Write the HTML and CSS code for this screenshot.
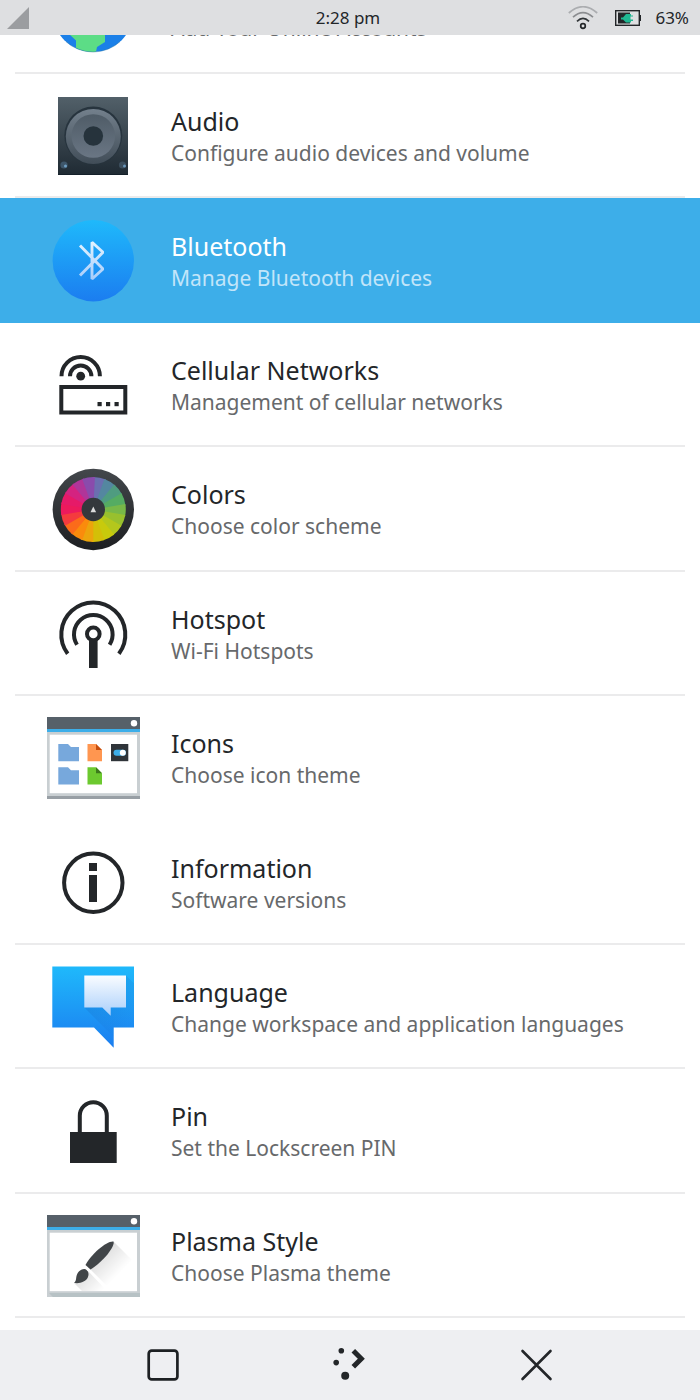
FILE: index.html
```html
<!DOCTYPE html>
<html lang="en">
<head>
<meta charset="utf-8">
<meta name="viewport" content="width=device-width, initial-scale=1">
<title>Settings</title>
<link rel="stylesheet" href="styles.css">
</head>
<body>

<!-- Status bar -->
<header class="statusbar">
  <div class="status-left">
    <svg class="signal" viewBox="0 0 22 22"><path d="M0 22L22 0V22Z" fill="#9b9da0"/></svg>
  </div>
  <div class="clock">2:28 pm</div>
  <div class="status-right">
    <svg class="wifi" viewBox="0 0 30 24" fill="none" stroke-width="1.7">
      <path d="M.8 7Q15-5.600 29.200 7" stroke="#abadb0"/>
      <path d="M5 11.200Q15 2 25 11.200" stroke="#8b8d90"/>
      <path d="M9 15.300Q15 9.600 21 15.300" stroke="#303437"/>
      <circle cx="15" cy="20" r="2.300" stroke="#232629"/>
    </svg>
    <svg class="battery" viewBox="0 0 26 16">
      <rect x=".7" y=".7" width="23.600" height="14.600" fill="none" stroke="#232629" stroke-width="1.400"/>
      <rect x="24" y="5" width="2" height="6" fill="#232629"/>
      <rect x="3" y="2.500" width="12" height="11" fill="#232629"/>
      <path d="M6 7.500H8L11 4H16V5.500H18V6.500H15.500V9.500H18V11H16V12.500H11L8 9.500H6Z" fill="#1fb792"/>
    </svg>
    <span class="percent">63%</span>
  </div>
</header>

<!-- Settings modules -->
<main class="modules">
  <a href="#" class="module module-cut">
    <svg class="icon" viewBox="0 0 94 94">
      <circle cx="47" cy="46.500" r="40.500" fill="#1b80e8"/>
      <path d="M16 58L23 69L30 75.500V83Q39 87.500 50 86.800L51 82L59 77V68L40 55Z" fill="#5cdd86"/>
      <path d="M20 76.700A40.500 40.500 0 0 0 74 76.700" fill="none" stroke="#1b6c9c" stroke-opacity=".4"/>
    </svg>
    <div class="label">
      <span class="subtitle">Add Your Online Accounts</span>
    </div>
  </a>

  <a href="#" class="module">
    <svg class="icon" viewBox="0 0 94 94">
      <defs>
        <linearGradient id="box" x1="0" y1="0" x2="0" y2="1"><stop offset="0" stop-color="#526069"/><stop offset="1" stop-color="#1f2a33"/></linearGradient>
        <linearGradient id="cone" x1="0" y1="0" x2="0" y2="1"><stop offset="0" stop-color="#73808c"/><stop offset="1" stop-color="#414d58"/></linearGradient>
        <linearGradient id="cone2" x1="0" y1="0" x2="0" y2="1"><stop offset="0" stop-color="#4f5c67"/><stop offset="1" stop-color="#6a7684"/></linearGradient>
      </defs>
      <rect x="12" y="8" width="70" height="78" fill="url(#box)"/>
      <path d="M12 85.500H82" stroke="#14202a"/>
      <circle cx="47.300" cy="46.500" r="29" fill="#27343e"/>
      <circle cx="47.300" cy="47.500" r="27.500" fill="url(#cone)"/>
      <circle cx="47.300" cy="47" r="21.800" fill="url(#cone2)"/>
      <circle cx="47.300" cy="47" r="9.800" fill="#26333c"/>
      <circle cx="18" cy="76" r="3.600" fill="#3e566a"/><circle cx="19.500" cy="77" r="1.500" fill="#6f9fc4"/>
      <circle cx="76.500" cy="76" r="3.600" fill="#3b4d5c"/><circle cx="78.500" cy="77" r="1.500" fill="#6894b8"/>
    </svg>
    <div class="label">
      <span class="title">Audio</span>
      <span class="subtitle">Configure audio devices and volume</span>
    </div>
  </a>

  <a href="#" class="module selected">
    <svg class="icon" viewBox="0 0 94 94">
      <defs>
        <linearGradient id="blue" x1="0" y1="0" x2="0" y2="1"><stop offset="0" stop-color="#1fb9fb"/><stop offset="1" stop-color="#1b7df0"/></linearGradient>
        <linearGradient id="rune" gradientUnits="userSpaceOnUse" x1="0" y1="26" x2="0" y2="67"><stop offset="0" stop-color="#e4f5ff"/><stop offset="1" stop-color="#a6cbfa"/></linearGradient>
      </defs>
      <circle cx="47.300" cy="46.700" r="40.700" fill="url(#blue)"/>
      <path d="M34 31.500L57 55L46 65V28.300L57 38.300L34 61.500" fill="none" stroke="url(#rune)" stroke-width="2.900" stroke-linejoin="bevel"/>
    </svg>
    <div class="label">
      <span class="title">Bluetooth</span>
      <span class="subtitle">Manage Bluetooth devices</span>
    </div>
  </a>

  <a href="#" class="module">
    <svg class="icon" viewBox="0 0 94 94">
      <g fill="none" stroke="#232629" stroke-width="4">
        <rect x="15.300" y="49" width="64" height="25.500"/>
        <path d="M15.500 38.200A19.200 19.200 0 0 1 53.900 38.200"/>
        <path d="M24 38.200A10.700 10.700 0 0 1 45.400 38.200"/>
      </g>
      <g fill="#232629">
        <circle cx="34.700" cy="38.200" r="4.400"/>
        <rect x="51.500" y="64" width="4.200" height="4.200"/>
        <rect x="60" y="64" width="4.200" height="4.200"/>
        <rect x="68.500" y="64" width="4.200" height="4.200"/>
      </g>
    </svg>
    <div class="label">
      <span class="title">Cellular Networks</span>
      <span class="subtitle">Management of cellular networks</span>
    </div>
  </a>

  <a href="#" class="module">
    <svg class="icon" viewBox="0 0 94 94">
      <defs>
        <linearGradient id="rim" x1="0" y1="0" x2="0" y2="1"><stop offset="0" stop-color="#43474b"/><stop offset="1" stop-color="#1d1f22"/></linearGradient>
      </defs>
      <circle cx="47.300" cy="47.500" r="40.700" fill="url(#rim)"/>
      <!-- each wedge is one dash of a thick ring -->
      <g class="wheel" transform="rotate(-90 47.300 47.500)">
        <circle cx="47.300" cy="47.500" r="21.500" pathLength="18" stroke="#6b6fb0" stroke-dashoffset="0"/>
        <circle cx="47.300" cy="47.500" r="21.500" pathLength="18" stroke="#5487a0" stroke-dashoffset="-1"/>
        <circle cx="47.300" cy="47.500" r="21.500" pathLength="18" stroke="#4f9c80" stroke-dashoffset="-2"/>
        <circle cx="47.300" cy="47.500" r="21.500" pathLength="18" stroke="#55ac62" stroke-dashoffset="-3"/>
        <circle cx="47.300" cy="47.500" r="21.500" pathLength="18" stroke="#78b848" stroke-dashoffset="-4"/>
        <circle cx="47.300" cy="47.500" r="21.500" pathLength="18" stroke="#98c02e" stroke-dashoffset="-5"/>
        <circle cx="47.300" cy="47.500" r="21.500" pathLength="18" stroke="#b4c71c" stroke-dashoffset="-6"/>
        <circle cx="47.300" cy="47.500" r="21.500" pathLength="18" stroke="#c8ca0c" stroke-dashoffset="-7"/>
        <circle cx="47.300" cy="47.500" r="21.500" pathLength="18" stroke="#d3bf08" stroke-dashoffset="-8"/>
        <circle cx="47.300" cy="47.500" r="21.500" pathLength="18" stroke="#eca40c" stroke-dashoffset="-9"/>
        <circle cx="47.300" cy="47.500" r="21.500" pathLength="18" stroke="#fa8b0c" stroke-dashoffset="-10"/>
        <circle cx="47.300" cy="47.500" r="21.500" pathLength="18" stroke="#fb6b1a" stroke-dashoffset="-11"/>
        <circle cx="47.300" cy="47.500" r="21.500" pathLength="18" stroke="#f43b3e" stroke-dashoffset="-12"/>
        <circle cx="47.300" cy="47.500" r="21.500" pathLength="18" stroke="#ec1a5c" stroke-dashoffset="-13"/>
        <circle cx="47.300" cy="47.500" r="21.500" pathLength="18" stroke="#e61a68" stroke-dashoffset="-14"/>
        <circle cx="47.300" cy="47.500" r="21.500" pathLength="18" stroke="#d42380" stroke-dashoffset="-15"/>
        <circle cx="47.300" cy="47.500" r="21.500" pathLength="18" stroke="#b03599" stroke-dashoffset="-16"/>
        <circle cx="47.300" cy="47.500" r="21.500" pathLength="18" stroke="#8a4bac" stroke-dashoffset="-17"/>
      </g>
      <circle cx="47.300" cy="47.500" r="11.700" fill="#34383c"/>
      <path d="M44.500 50.200L47.300 44.500L50.100 50.200Z" fill="#dcdcdc"/>
    </svg>
    <div class="label">
      <span class="title">Colors</span>
      <span class="subtitle">Choose color scheme</span>
    </div>
  </a>

  <a href="#" class="module">
    <svg class="icon" viewBox="0 0 94 94">
      <g fill="none" stroke="#232629" stroke-width="4">
        <path d="M21.700 66.700A32 32 0 1 1 72.900 66.700"/>
        <path d="M31 57.700A19.300 19.300 0 1 1 63.600 57.700"/>
        <circle cx="47.300" cy="46.900" r="6.300"/>
      </g>
      <rect x="43" y="53" width="8.600" height="28" fill="#232629"/>
    </svg>
    <div class="label">
      <span class="title">Hotspot</span>
      <span class="subtitle">Wi-Fi Hotspots</span>
    </div>
  </a>

  <a href="#" class="module no-line">
    <svg class="icon" viewBox="0 0 94 94">
      <rect x="1" y="6" width="93" height="82" fill="#c9cfd2"/>
      <rect x="1" y="6" width="93" height="12" fill="#566069"/>
      <rect x="1" y="18" width="93" height="3" fill="#3daee9"/>
      <rect x="1" y="85" width="93" height="3" fill="#989fa5"/>
      <rect x="3.700" y="23.700" width="87.300" height="58.500" fill="#fff"/>
      <circle cx="88" cy="12.300" r="3.200" fill="#fff"/>
      <path d="M12.300 33H22L25 36H33V50.200H12.300Z M12.300 56.200H22L25 59.200H33V73.500H12.300Z" fill="#77a8dc"/>
      <path d="M41.500 33H50L56 39V50.200H41.500Z" fill="#ff9650"/>
      <path d="M50 33L56 39H50Z" fill="#c64d0c"/>
      <path d="M41.500 56.200H50L56 62.200V73.500H41.500Z" fill="#6cc92f"/>
      <path d="M50 56.200L56 62.200H50Z" fill="#3c7a1c"/>
      <rect x="65" y="33" width="17.300" height="17.200" fill="#2f3439"/>
      <rect x="67.500" y="38.800" width="12.500" height="6" rx="3" fill="#3daee9"/>
      <circle cx="76.800" cy="41.800" r="3" fill="#fff"/>
    </svg>
    <div class="label">
      <span class="title">Icons</span>
      <span class="subtitle">Choose icon theme</span>
    </div>
  </a>

  <a href="#" class="module">
    <svg class="icon" viewBox="0 0 94 94">
      <circle cx="47.300" cy="46.700" r="29.200" fill="none" stroke="#232629" stroke-width="4"/>
      <path d="M43 27H51V35H43Z M43 39H51V66H43Z" fill="#232629"/>
    </svg>
    <div class="label">
      <span class="title">Information</span>
      <span class="subtitle">Software versions</span>
    </div>
  </a>

  <a href="#" class="module">
    <svg class="icon" viewBox="0 0 94 94">
      <defs>
        <linearGradient id="paper" x1="0" y1="0" x2="0" y2="1"><stop offset="0" stop-color="#fafcff"/><stop offset="1" stop-color="#a9cffb"/></linearGradient>
        <linearGradient id="shade" x1="0" y1="0" x2="1" y2="1"><stop offset=".3" stop-color="#1667c0" stop-opacity=".25"/><stop offset=".9" stop-color="#1667c0" stop-opacity="0"/></linearGradient>
      </defs>
      <path d="M6.300 6.500H88V67.500H67.700V87.800L48 67.500H6.300Z" fill="url(#blue)"/>
      <path d="M80 15.500L88 23.500V67.500H67.700V77L38.300 47.500Z" fill="url(#shade)"/>
      <path d="M38.300 15.500H80V47.500H64.700V55.800L56.300 47.500H38.300Z" fill="url(#paper)"/>
    </svg>
    <div class="label">
      <span class="title">Language</span>
      <span class="subtitle">Change workspace and application languages</span>
    </div>
  </a>

  <a href="#" class="module">
    <svg class="icon" viewBox="0 0 94 94">
      <rect x="24" y="48" width="46.700" height="31" fill="#232629"/>
      <path d="M33.800 49V31.700A13.500 13.500 0 0 1 60.800 31.700V49" fill="none" stroke="#232629" stroke-width="4"/>
    </svg>
    <div class="label">
      <span class="title">Pin</span>
      <span class="subtitle">Set the Lockscreen PIN</span>
    </div>
  </a>

  <a href="#" class="module">
    <svg class="icon" viewBox="0 0 94 94">
      <defs>
        <linearGradient id="cast" gradientUnits="userSpaceOnUse" x1="48" y1="46" x2="70" y2="68"><stop offset="0" stop-color="#000" stop-opacity=".15"/><stop offset="1" stop-color="#000" stop-opacity="0"/></linearGradient>
      </defs>
      <rect x="1" y="6" width="93" height="82" fill="#c9cfd2"/>
      <path d="M1 82L7 88H94V84H3Z" fill="#b7c2c5"/>
      <rect x="1" y="6" width="93" height="12" fill="#566069"/>
      <rect x="1" y="18" width="93" height="3" fill="#3daee9"/>
      <rect x="3.700" y="23.700" width="87.300" height="58.500" fill="#fff"/>
      <circle cx="88" cy="12.300" r="3.200" fill="#fff"/>
      <path d="M68 33L91 56V82H66L44 60Z" fill="url(#cast)"/>
      <path d="M42 62L61 82H36L28 74Z" fill="url(#cast)"/>
      <path d="M67.500 32.500C69.500 37 57 53 44.500 60.500L39.500 56C45 45 61 31.500 67.500 32.500Z" fill="#414548"/>
      <path d="M38.300 60C41.500 60.500 43.500 64 42 68C40 73 33 75 28 73.800C31 71.500 29.500 69 31 65.500C32.500 62 35.500 60 38.300 60Z" fill="#414548"/>
    </svg>
    <div class="label">
      <span class="title">Plasma Style</span>
      <span class="subtitle">Choose Plasma theme</span>
    </div>
  </a>
</main>

<!-- Navigation panel -->
<nav class="navbar">
  <button type="button" aria-label="Task switcher">
    <svg viewBox="0 0 40 40"><rect x="5.700" y="5.700" width="28.700" height="28.700" rx="3" fill="none" stroke="#1d2023" stroke-width="2.700"/></svg>
  </button>
  <button type="button" aria-label="Home">
    <svg viewBox="0 0 40 40" fill="#232629">
      <circle cx="11.300" cy="5.700" r="2.800"/>
      <circle cx="6.200" cy="17.600" r="2.800"/>
      <circle cx="15.200" cy="30.700" r="4"/>
      <path d="M23.300 5.700L31.300 13.700L23.300 21.700" fill="none" stroke="#232629" stroke-width="5"/>
    </svg>
  </button>
  <button type="button" aria-label="Close">
    <svg viewBox="0 0 40 40"><path d="M5.500 6L33.500 34M33.500 6L5.500 34" stroke="#232629" stroke-width="2.600" stroke-linecap="round"/></svg>
  </button>
</nav>

</body>
</html>
```
FILE: styles.css
```css
* {
  box-sizing: border-box;
}

body {
  margin: 0;
  min-height: 100vh;
  display: flex;
  flex-direction: column;
  font-family: "Noto Sans", sans-serif;
  background-color: #fff;
  color: #232629;
}

svg {
  display: block;
}

/* Status bar */
.statusbar {
  display: grid;
  grid-template-columns: 1fr auto 1fr;
  align-items: center;
  height: 35px;
  padding: 0 11px 0 7px;
  background-color: #dedfe1;
  font-size: 17px;
}

.signal {
  width: 22px;
  height: 22px;
}

.status-right {
  display: flex;
  align-items: center;
  justify-content: flex-end;
}

.wifi {
  width: 30px;
  height: 24px;
  margin-right: 17px;
}

.battery {
  width: 26px;
  height: 16px;
  margin-right: 14px;
}

/* Module list */
.modules {
  flex: 1;
  display: flex;
  flex-direction: column;
  padding-bottom: 12px;
}

.module {
  flex: 1 0 auto;
  display: flex;
  align-items: center;
  gap: 31px;
  padding: 15px 15px 15px 46px;
  color: #232629;
  text-decoration: none;
  background: linear-gradient(#ebebec, #ebebec) center bottom / calc(100% - 30px) 2px no-repeat;
}

/* row scrolled partly under the status bar */
.module-cut {
  flex: 0 0 39px;
  height: 39px;
  align-items: flex-end;
  overflow: hidden;
}

.module-cut .label {
  padding-bottom: 16px;
}

.no-line {
  background: none;
}

.selected {
  background: #3daee9;
  color: #fff;
}

.icon {
  flex: none;
  width: 94px;
  height: 94px;
}

.wheel circle {
  fill: none;
  stroke-width: 22;
  stroke-dasharray: 1.15 16.85;
}

.label {
  display: flex;
  flex-direction: column;
}

.title {
  font-size: 25px;
  line-height: 34px;
}

.subtitle {
  font-size: 21px;
  line-height: 30px;
  color: #67696b;
}

.selected .subtitle {
  color: #c2e5f9;
}

/* Navigation panel */
.navbar {
  display: flex;
  height: 70px;
  padding: 0 10%;
  background-color: #eeeff2;
}

.navbar button {
  flex: 1;
  display: flex;
  align-items: center;
  justify-content: center;
  padding: 0;
  border: 0;
  background: none;
  cursor: pointer;
}

.navbar svg {
  width: 40px;
  height: 40px;
}
```
